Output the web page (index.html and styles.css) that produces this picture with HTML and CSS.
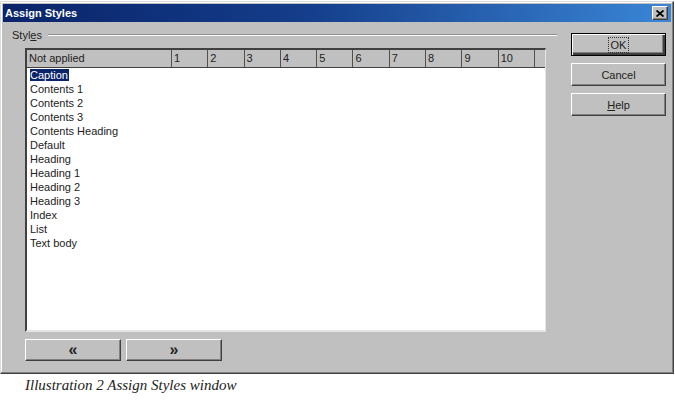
FILE: index.html
```html
<!DOCTYPE html>
<html lang="en">
<head>
    <meta charset="UTF-8">
    <meta name="viewport" content="width=device-width, initial-scale=1.0">
    <title>Assign Styles</title>
    <link rel="stylesheet" href="styles.css">
</head>
<body>
    <div class="dialog">
        <div class="titlebar">
            <span class="title">Assign Styles</span>
            <button class="close-btn" aria-label="Close">
                <svg width="8" height="7" viewBox="0 0 8 7">
                    <path d="M0.5 0.5 L7.5 6.5 M7.5 0.5 L0.5 6.5" stroke="#000" stroke-width="1.8"/>
                </svg>
            </button>
        </div>
        <div class="content">
            <div class="main">
                <div class="group-label">
                    <span>Styl<u>e</u>s</span>
                    <div class="group-line"></div>
                </div>
                <div class="listbox">
                    <div class="header">
                        <div class="cell">Not applied</div>
                        <div class="cell">1</div>
                        <div class="cell">2</div>
                        <div class="cell">3</div>
                        <div class="cell">4</div>
                        <div class="cell">5</div>
                        <div class="cell">6</div>
                        <div class="cell">7</div>
                        <div class="cell">8</div>
                        <div class="cell">9</div>
                        <div class="cell">10</div>
                        <div class="cell"></div>
                    </div>
                    <ul class="rows">
                        <li><span class="selected">Caption</span></li>
                        <li>Contents 1</li>
                        <li>Contents 2</li>
                        <li>Contents 3</li>
                        <li>Contents Heading</li>
                        <li>Default</li>
                        <li>Heading</li>
                        <li>Heading 1</li>
                        <li>Heading 2</li>
                        <li>Heading 3</li>
                        <li>Index</li>
                        <li>List</li>
                        <li>Text body</li>
                    </ul>
                </div>
                <div class="nav-buttons">
                    <button class="btn nav-btn">&laquo;</button>
                    <button class="btn nav-btn">&raquo;</button>
                </div>
            </div>
            <div class="side">
                <button class="btn default-btn"><span class="focus">OK</span></button>
                <button class="btn">Cancel</button>
                <button class="btn"><u>H</u>elp</button>
            </div>
        </div>
    </div>
    <p class="caption">Illustration 2 Assign Styles window</p>
</body>
</html>
```

FILE: styles.css
```css
body {
    margin: 0;
    background: #fff;
    font-family: "Liberation Sans", Arial, sans-serif;
    font-size: 11px;
    color: #000;
}
.dialog {
    box-sizing: border-box;
    width: 674px;
    height: 373px;
    margin-top: 1px;
    background: #c0c0c0;
    border-top: 1px solid #dcdcdc;
    border-left: 1px solid #dcdcdc;
    border-right: 1px solid #404040;
    border-bottom: 1px solid #404040;
    box-shadow: inset -1px -1px 0 #808080, inset 1px 1px 0 #fff;
    padding: 2px;
    display: flex;
    flex-direction: column;
}
.titlebar {
    height: 18px;
    display: flex;
    align-items: center;
    justify-content: space-between;
    background: linear-gradient(to right, #0a246a, #143d8a 45%, #3a86d6);
    padding: 0 3px 0 2px;
}
.title {
    color: #fff;
    font-weight: bold;
    font-size: 11px;
}
.close-btn {
    width: 16px;
    height: 14px;
    padding: 0;
    display: flex;
    align-items: center;
    justify-content: center;
    background: #c0c0c0;
    border: 1px solid;
    border-color: #fff #404040 #404040 #fff;
    box-shadow: inset -1px -1px 0 #808080;
}
.content {
    flex: 1;
    display: flex;
}
.main {
    width: 565px;
    display: flex;
    flex-direction: column;
}
.group-label {
    display: flex;
    align-items: center;
    gap: 6px;
    margin: 6px 0 0 9px;
    height: 14px;
    color: #222;
}
.group-line {
    flex: 1;
    margin-right: 11px;
    height: 0;
    border-top: 1px solid #909090;
    border-bottom: 1px solid #fff;
}
.listbox {
    margin: 6px 0 0 22px;
    width: 521px;
    height: 284px;
    box-sizing: border-box;
    background: #fff;
    border-top: 2px solid #404040;
    border-left: 2px solid #404040;
    border-right: 1px solid #e4e4e4;
    border-bottom: 2px solid #e4e4e4;
    display: flex;
    flex-direction: column;
}
.header {
    display: grid;
    grid-template-columns: 145px repeat(10, 36.3px) 1fr;
    height: 17px;
    background: #c0c0c0;
    border-bottom: 1px solid #404040;
}
.cell {
    border-right: 1px solid #505050;
    padding-left: 2px;
    line-height: 17px;
    color: #222;
}
.cell:last-child {
    border-right: none;
}
.rows {
    list-style: none;
    margin: 0;
    padding: 0 0 0 3px;
    color: #222;
}
.rows li {
    height: 14px;
    line-height: 14px;
}
.selected {
    background: #0a246a;
    color: #fff;
    padding: 0 1px 0 0;
}
.nav-buttons {
    display: flex;
    gap: 5px;
    margin: 7px 0 0 22px;
}
.btn {
    font-family: "Liberation Sans", Arial, sans-serif;
    font-size: 11px;
    color: #222;
    background: #c0c0c0;
    border: 1px solid;
    border-color: #fff #404040 #404040 #fff;
    box-shadow: inset -1px -1px 0 #808080;
    padding: 0;
    height: 23px;
}
.nav-btn {
    width: 96px;
    height: 22px;
    font-size: 16px;
    font-weight: bold;
    line-height: 16px;
}
.side {
    display: flex;
    flex-direction: column;
    gap: 7px;
    padding-top: 11px;
    margin-left: 3px;
}
.side .btn {
    width: 95px;
}
.default-btn {
    border: 1px solid #000;
    box-shadow: inset 1px 1px 0 #fff, inset -2px -2px 0 #404040, inset -3px -3px 0 #808080;
}
.focus {
    border: 1px dotted #333;
    padding: 1px 2px;
}
.caption {
    margin: 3px 0 0 25px;
    font-family: "Liberation Serif", "Times New Roman", serif;
    font-style: italic;
    font-size: 15px;
    color: #222;
}
```
